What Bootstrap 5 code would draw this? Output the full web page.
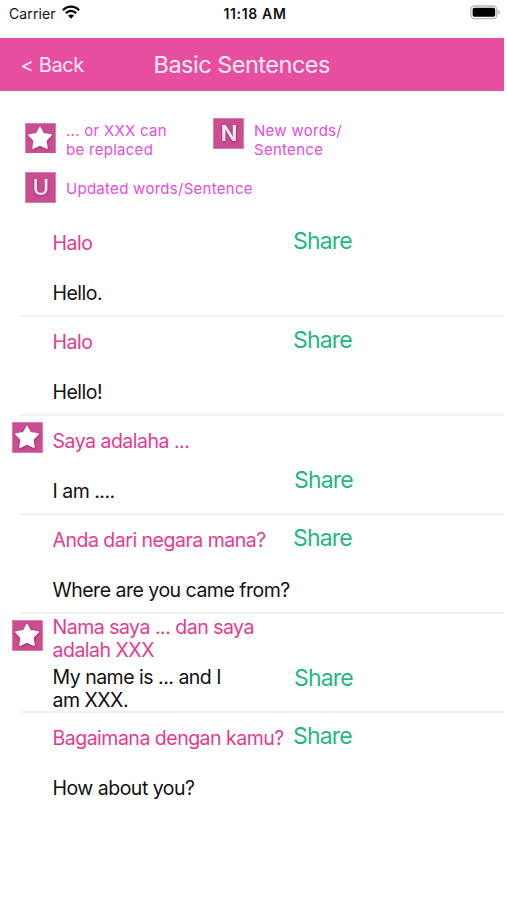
<!DOCTYPE html>
<html lang="en">
<head>
<meta charset="utf-8">
<meta name="viewport" content="width=device-width, initial-scale=1">
<title>Basic Sentences</title>
<link href="https://cdn.jsdelivr.net/npm/bootstrap@5.3.0/dist/css/bootstrap.min.css" rel="stylesheet">
<style>
body{font-family:Inter,"Liberation Sans",sans-serif;background:#fff;color:#111;overflow:hidden}
.screen{width:504px;height:900px}
.status{height:38px;display:grid;grid-template-columns:1fr auto 1fr;padding:0 3px 10px 9px;font-size:14px;line-height:28px}
.carrier{letter-spacing:.1px;gap:6px}
.clock{font-weight:600;font-size:14px;letter-spacing:.65px}
.titlebar{height:53px;background:#e84e9f;color:#ffe9f6;padding:1px 0 0 20.5px}
.back{width:133px;font-size:20px;letter-spacing:-.35px;color:inherit;line-height:52px}
.heading{font-size:23.5px;letter-spacing:-.5px;line-height:52px;font-weight:400}
.legend{height:126px;padding:27px 0 0 25px;color:#e84be0;font-size:15px;line-height:18.6px;letter-spacing:.28px}
.legend-top{height:54px}
.legend-item{gap:10px}
.legend-first{width:188px}
.tile{width:31px;height:31px;display:block;flex:none}
.tile text{letter-spacing:0}
.phrase{height:99px;display:grid;grid-template-columns:40.5px 240.5px 1fr;margin-left:12px;position:relative}
.phrase::after{content:"";position:absolute;left:8px;right:0;bottom:-1px;height:2px;background:#f2f2f3}
.phrase:last-child::after{display:none}
.lines{display:grid;grid-template-rows:50px 50px;padding-top:1px;font-size:19.5px;line-height:23px;letter-spacing:-.5px;white-space:nowrap}
.local{color:#e63a92}
.share{color:#1fb980;font-size:23px;line-height:28px;letter-spacing:-.85px;padding:10px 0 0}
.share.low{padding:51px 0 0 1px}
.tile-cell{padding-top:7px}
</style>
<script src="https://cdn.jsdelivr.net/npm/bootstrap@5.3.0/dist/js/bootstrap.bundle.min.js"></script>
</head>
<body>
<svg width="0" height="0" class="position-absolute" aria-hidden="true">
<defs>
<filter id="soft" x="-20%" y="-20%" width="140%" height="140%"><feDropShadow dx=".5" dy="1" stdDeviation=".9" flood-color="#7d2058" flood-opacity=".7"/></filter>
<linearGradient id="metal" x1="0" y1="0" x2="0" y2="1"><stop offset="0" stop-color="#fff"/><stop offset="1" stop-color="#e3cfdb"/></linearGradient>
<symbol id="plate" viewBox="0 0 31 31"><rect x=".5" y=".5" width="30" height="30" fill="#c94d90" stroke="#dc7db0"/></symbol>
<symbol id="star" viewBox="0 0 31 31"><use href="#plate"/><path d="M15 4.5l3.3 6.3 7.8 1.3-5.3 5.5 1.1 7.6-6.9-3.4-6.9 3.4 1.1-7.6-5.3-5.5 7.8-1.3z" fill="#fff" stroke="#fff" stroke-width="1.5" stroke-linejoin="round" filter="url(#soft)"/></symbol>
</defs>
</svg>
<main class="screen">
<div class="status">
<div class="carrier d-flex align-items-center"><span>Carrier</span>
<svg width="18" height="14" viewBox="0 0 18 14" class="mb-1" fill="none" stroke="#000" stroke-width="2.3" aria-label="Wi-Fi"><path d="M.9 5.2C5.5.4 12.5.4 17.1 5.2M3.9 8.2c2.9-3 7.3-3 10.2 0"/><path d="M9 13.7l-3-3.1c1.7-1.6 4.3-1.6 6 0z" fill="#000" stroke="none"/></svg></div>
<div class="clock">11:18 AM</div>
<div class="d-flex align-items-center justify-content-end"><svg class="mb-1" width="31" height="15" viewBox="0 0 31 15" aria-label="Battery"><rect x=".8" y="1" width="26" height="12.6" rx="3.6" fill="#fff" stroke="#b9b9b9" stroke-width="1.4"/><rect x="2.6" y="2.8" width="22.6" height="9" rx="1.7"/><path d="M28.2 5.2c2.2.6 2.2 3.6 0 4.2z" fill="#aaa"/></svg></div>
</div>
<header class="titlebar d-flex align-items-center">
<a href="#" class="back text-decoration-none">&lt; Back</a>
<h1 class="heading m-0">Basic Sentences</h1>
</header>
<section class="legend">
<div class="legend-top d-flex">
<div class="legend-item legend-first d-flex"><svg class="tile mt-1"><use href="#star" y="1"/></svg><span class="pt-1">... or XXX can<br>be replaced</span></div>
<div class="legend-item d-flex"><svg class="tile" viewBox="0 0 31 31"><use href="#plate"/><text x="16" y="23" text-anchor="middle" font-size="22" font-weight="600" fill="url(#metal)" filter="url(#soft)">N</text></svg><span class="pt-1">New words/<br>Sentence</span></div>
</div>
<div class="legend-item d-flex align-items-center"><svg class="tile" viewBox="0 0 31 31"><use href="#plate"/><text x="16" y="23" text-anchor="middle" font-size="22" font-weight="500" fill="url(#metal)" filter="url(#soft)">U</text></svg><span class="pt-1">Updated words/Sentence</span></div>
</section>
<section>
<article class="phrase"><div></div><div class="lines align-items-center"><div class="local">Halo</div><div>Hello.</div></div><div class="share">Share</div></article>
<article class="phrase"><div></div><div class="lines align-items-center"><div class="local">Halo</div><div>Hello!</div></div><div class="share">Share</div></article>
<article class="phrase"><div class="tile-cell"><svg class="tile"><use href="#star"/></svg></div><div class="lines align-items-center"><div class="local">Saya adalaha ...</div><div>I am ....</div></div><div class="share low">Share</div></article>
<article class="phrase"><div></div><div class="lines align-items-center"><div class="local">Anda dari negara mana?</div><div>Where are you came from?</div></div><div class="share">Share</div></article>
<article class="phrase"><div class="tile-cell"><svg class="tile"><use href="#star"/></svg></div><div class="lines align-items-center"><div class="local">Nama saya ... dan saya<br>adalah XXX</div><div>My name is ... and I<br>am XXX.</div></div><div class="share low">Share</div></article>
<article class="phrase"><div></div><div class="lines align-items-center"><div class="local">Bagaimana dengan kamu?</div><div>How about you?</div></div><div class="share">Share</div></article>
</section>
</main>
</body>
</html>
